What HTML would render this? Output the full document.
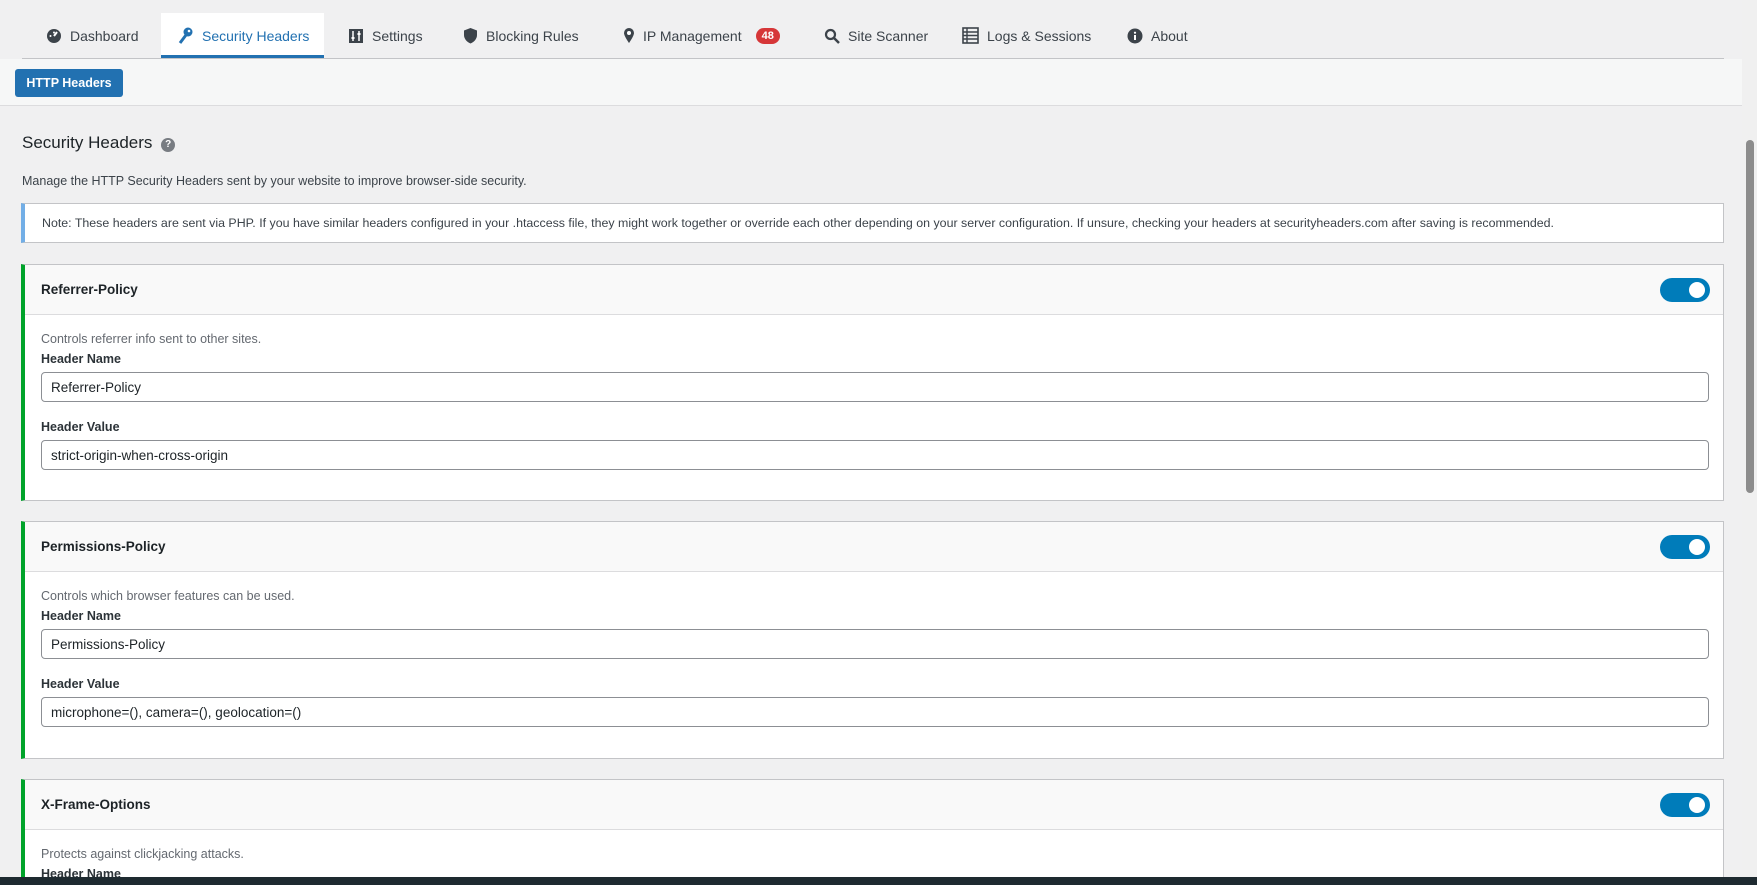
<!DOCTYPE html>
<html><head><meta charset="utf-8"><style>
*{box-sizing:border-box;margin:0;padding:0}
html,body{width:1757px;height:885px;overflow:hidden}
body{background:#f0f0f1;font-family:"Liberation Sans",sans-serif;color:#1d2327;position:relative}
.a{position:absolute}
.tab{position:absolute;top:13px;height:45px;font-size:14px;color:#3c434a;display:flex;align-items:center}
.tab svg{margin-right:8px}
.card{position:absolute;left:21px;width:1703px;background:#fff;border:1px solid #c3c4c7;border-left:4px solid #00a32a;overflow:hidden}
.ch{height:50px;background:#f9f9f9;border-bottom:1px solid #dcdcde;padding-left:16px;display:flex;align-items:center;font-weight:bold;font-size:13.5px;color:#1d2327;position:relative}
.tg{position:absolute;right:13px;top:13px;width:50px;height:24px;border-radius:12px;background:#007cba}
.tg:after{content:"";position:absolute;right:5px;top:4px;width:16px;height:16px;border-radius:50%;background:#fff}
.cb{padding:17px 14px 0 16px;position:relative}
.d{font-size:12.5px;color:#646970;height:20px}
.l{font-size:12.5px;font-weight:bold;color:#2c3338;height:20px}
.in{height:30px;border:1px solid #8c8f94;border-radius:4px;padding-left:9px;font-size:13.5px;display:flex;align-items:center;margin-bottom:18px;width:1668px}
</style></head><body>
<div class="a" style="left:161px;top:13px;width:163px;height:45px;background:#fff;border-bottom:3px solid #2271b1"></div>
<div class="a" style="left:22px;top:58px;width:1702px;height:1px;background:#c3c4c7"></div>
<div class="tab" style="left:46px"><svg width="16" height="16" viewBox="0 0 16 16"><circle cx="8" cy="8" r="7" fill="#3c434a"/><path d="M8 8L11 4" stroke="#fff" stroke-width="2"/><circle cx="4.5" cy="8" r="1" fill="#fff"/><circle cx="8" cy="4.5" r="1" fill="#fff"/></svg>Dashboard</div>
<div class="tab" style="left:178px;color:#2271b1"><svg width="16" height="18" viewBox="0 0 16 18"><circle cx="10" cy="5" r="4.5" fill="#2271b1"/><path d="M8 8L2 16" stroke="#2271b1" stroke-width="3"/><circle cx="11" cy="4" r="1.3" fill="#fff"/></svg>Security Headers</div>
<div class="tab" style="left:348px"><svg width="16" height="16" viewBox="0 0 16 16"><rect x="1" y="1" width="14" height="14" fill="#3c434a"/><path d="M5 3v10M11 3v10" stroke="#fff" stroke-width="1.5"/><rect x="3.5" y="9" width="3" height="2" fill="#fff"/><rect x="9.5" y="5" width="3" height="2" fill="#fff"/></svg>Settings</div>
<div class="tab" style="left:463px"><svg width="15" height="17" viewBox="0 0 15 17"><path d="M7.5 1L14 3.5V8c0 4-3 7-6.5 8.5C4 15 1 12 1 8V3.5z" fill="#3c434a"/></svg>Blocking Rules</div>
<div class="tab" style="left:623px"><svg width="12" height="17" viewBox="0 0 12 17"><path d="M6 16C6 16 11 9 11 6A5 5 0 0 0 1 6C1 9 6 16 6 16z" fill="#3c434a"/><circle cx="6" cy="6" r="2" fill="#fff"/></svg>IP Management<span style="margin-left:14px;background:#d63638;color:#fff;border-radius:9px;font-size:11px;font-weight:bold;padding:2px 6px">48</span></div>
<div class="tab" style="left:824px"><svg width="16" height="16" viewBox="0 0 16 16"><circle cx="6.5" cy="6.5" r="4.5" fill="none" stroke="#3c434a" stroke-width="2.2"/><path d="M10 10l5 5" stroke="#3c434a" stroke-width="2.5"/></svg>Site Scanner</div>
<div class="tab" style="left:962px"><svg width="17" height="17" viewBox="0 0 17 17"><rect x="1" y="1" width="15" height="15" fill="none" stroke="#3c434a" stroke-width="1.6"/><path d="M1 5h15M1 8.5h15M1 12h15M5 1v15" stroke="#3c434a" stroke-width="1.4"/></svg>Logs &amp; Sessions</div>
<div class="tab" style="left:1127px"><svg width="16" height="16" viewBox="0 0 16 16"><circle cx="8" cy="8" r="7.5" fill="#3c434a"/><rect x="7" y="7" width="2" height="5" fill="#fff"/><circle cx="8" cy="4.7" r="1.1" fill="#fff"/></svg>About</div>
<div class="a" style="left:0;top:59px;width:1742px;height:47px;background:#f6f7f7;border-bottom:1px solid #dcdcde"></div>
<div class="a" style="left:15px;top:69px;width:108px;height:28px;background:#2271b1;border-radius:3px;color:#fff;font-size:12.5px;font-weight:bold;display:flex;align-items:center;justify-content:center">HTTP Headers</div>
<div class="a" style="left:22px;top:133px;font-size:17px;color:#1d2327">Security Headers <span style="display:inline-block;width:14px;height:14px;border-radius:50%;background:#787c82;color:#fff;font-size:10px;text-align:center;line-height:14px;font-weight:bold;vertical-align:1px;margin-left:4px">?</span></div>
<div class="a" style="left:22px;top:174px;font-size:12.5px;color:#3c434a">Manage the HTTP Security Headers sent by your website to improve browser-side security.</div>
<div class="a" style="left:21px;top:203px;width:1703px;height:40px;background:#fff;border:1px solid #c3c4c7;border-left:4px solid #72aee6;padding-left:17px;font-size:12.4px;color:#3c434a;display:flex;align-items:center;white-space:nowrap;overflow:hidden">Note: These headers are sent via PHP. If you have similar headers configured in your .htaccess file, they might work together or override each other depending on your server configuration. If unsure, checking your headers at securityheaders.com after saving is recommended.</div>
<div class="card" style="top:264px;height:237px"><div class="ch">Referrer-Policy<div class="tg"></div></div><div class="cb"><div class="d">Controls referrer info sent to other sites.</div><div class="l">Header Name</div><div class="in">Referrer-Policy</div><div class="l">Header Value</div><div class="in">strict-origin-when-cross-origin</div></div></div>
<div class="card" style="top:521px;height:238px"><div class="ch">Permissions-Policy<div class="tg"></div></div><div class="cb"><div class="d">Controls which browser features can be used.</div><div class="l">Header Name</div><div class="in">Permissions-Policy</div><div class="l">Header Value</div><div class="in">microphone=(), camera=(), geolocation=()</div></div></div>
<div class="card" style="top:779px;height:98px;border-bottom:none"><div class="ch">X-Frame-Options<div class="tg"></div></div><div class="cb"><div class="d">Protects against clickjacking attacks.</div><div class="l">Header Name</div></div></div>
<div class="a" style="left:1742px;top:0;width:15px;height:877px;background:#f0f0f0"></div>
<div class="a" style="left:1746px;top:140px;width:8px;height:353px;background:#8c8c8c;border-radius:4px"></div>
<div class="a" style="left:0;top:877px;width:1757px;height:8px;background:#1e2a30"></div>
</body></html>
